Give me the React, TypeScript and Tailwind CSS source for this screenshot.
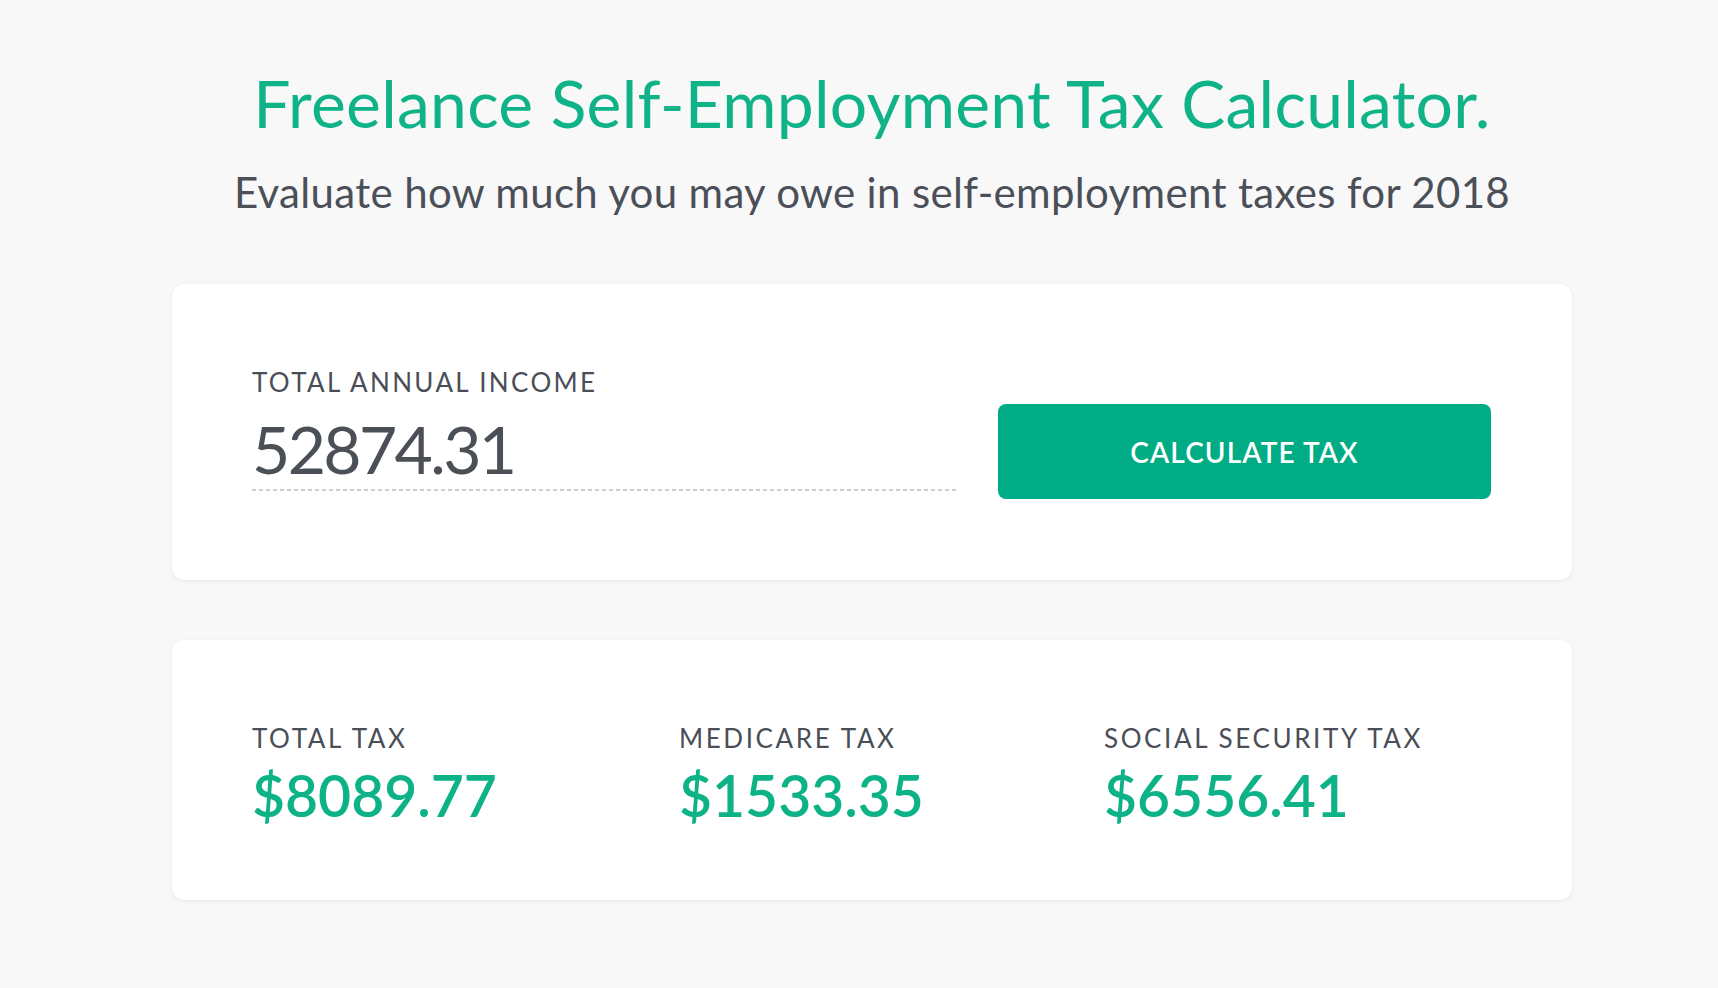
import { useState } from "react";

const FONT = "font-['Lato','Open_Sans',sans-serif]";

function Stat({ label, value }: { label: string; value: string }) {
  return (
    <div className="flex flex-col">
      <span className="text-[26px] leading-none tracking-[0.1em] text-[#4a4e57]">{label}</span>
      <span className="mt-[16px] text-[57px] leading-none font-semibold text-[#0db387]">{value}</span>
    </div>
  );
}

export default function App() {
  const [income, setIncome] = useState("52874.31");

  return (
    <div className={`min-h-screen bg-[#f8f8f8] pl-[26px] pt-[70px] pb-20 ${FONT}`}>
      <div className="w-[1400px] mx-auto">
        <h1 className="text-center text-[66px] leading-none font-normal tracking-[0.004em] text-[#10b288]">
          Freelance Self-Employment Tax Calculator.
        </h1>
        <p className="mt-[35px] text-center text-[42px] leading-none tracking-[0.008em] text-[#4a4f58]">
          Evaluate how much you may owe in self-employment taxes for 2018
        </p>

        {/* Income card */}
        <div className="mt-[71px] h-[296px] rounded-xl bg-white shadow-[0_1px_4px_rgba(0,0,0,0.07)] pl-[80px] pr-[81px] pt-[85px] flex items-start">
          <div className="w-[706px] flex flex-col">
            <label className="text-[26px] leading-none tracking-[0.09em] text-[#4a4e57]">TOTAL ANNUAL INCOME</label>
            <input
              value={income}
              onChange={(e) => setIncome(e.target.value)}
              className="mt-[20px] h-[66px] text-[66px] leading-none tracking-[-0.04em] text-[#4b4f56] bg-transparent outline-none"
            />
            <div className="mt-[8px] h-[2px] bg-[repeating-linear-gradient(90deg,#cdcdcd_0_4px,transparent_4px_7px)]" />
          </div>
          <button className="ml-auto mt-[35px] w-[493px] h-[95px] rounded-lg bg-[#00ac84] text-white text-[28px] font-semibold tracking-[0.04em] cursor-pointer">
            CALCULATE TAX
          </button>
        </div>

        {/* Results card */}
        <div className="mt-[60px] h-[260px] rounded-xl bg-white shadow-[0_1px_4px_rgba(0,0,0,0.07)] pl-[80px] pr-[81px] pt-[85px] grid grid-cols-[427px_425px_1fr]">
          <Stat label="TOTAL TAX" value="$8089.77" />
          <Stat label="MEDICARE TAX" value="$1533.35" />
          <Stat label="SOCIAL SECURITY TAX" value="$6556.41" />
        </div>
      </div>
    </div>
  );
}
